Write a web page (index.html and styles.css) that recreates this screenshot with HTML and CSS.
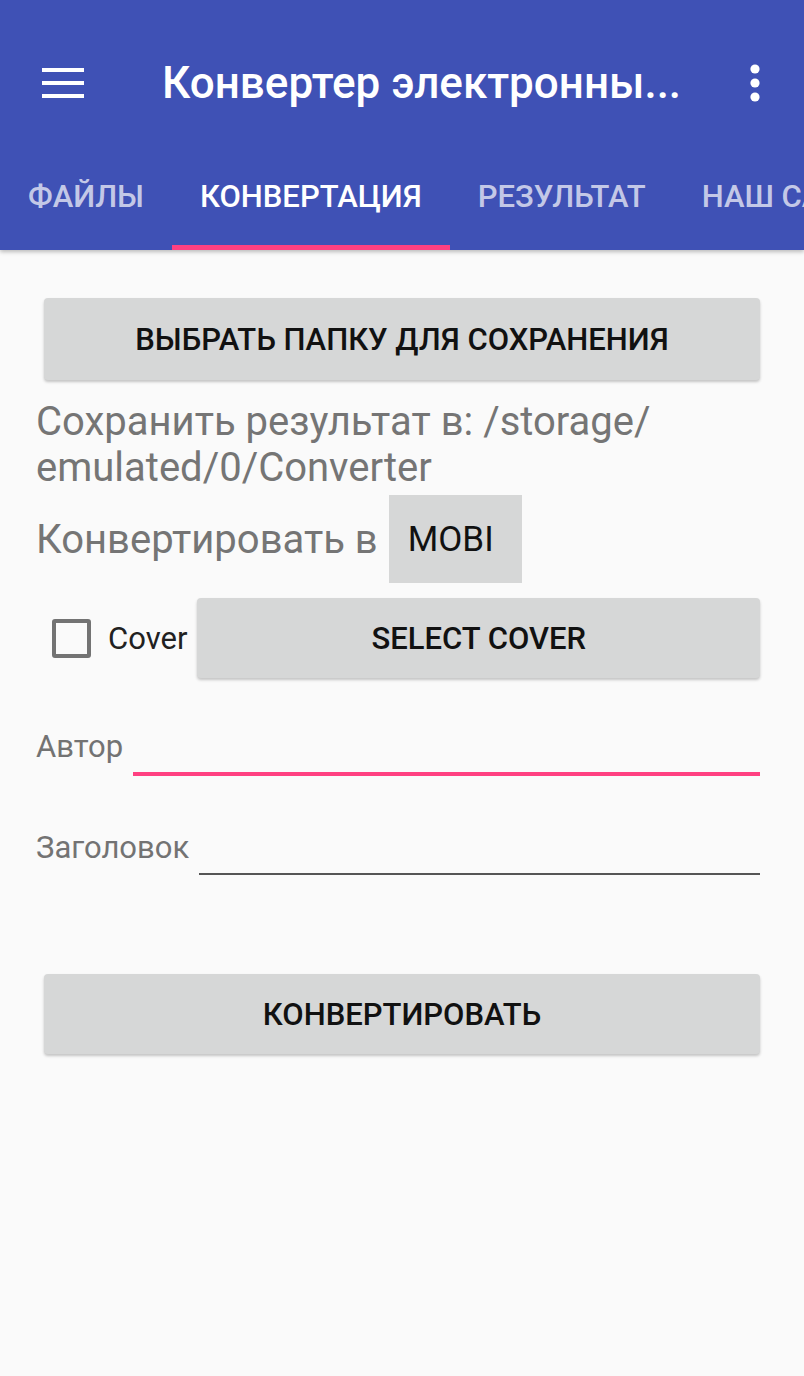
FILE: index.html
```html
<!DOCTYPE html>
<html lang="ru">
<head>
    <meta charset="UTF-8">
    <meta name="viewport" content="width=device-width, initial-scale=1.0">
    <title>Конвертер электронных книг</title>
    <link rel="stylesheet" href="styles.css">
</head>
<body>
    <header class="appbar">
        <div class="toolbar">
            <button class="icon-btn menu" aria-label="Меню">
                <svg width="42" height="32" viewBox="0 0 42 32">
                    <rect x="0" y="1" width="42" height="4" fill="#fff"/>
                    <rect x="0" y="14" width="42" height="4" fill="#fff"/>
                    <rect x="0" y="27" width="42" height="4" fill="#fff"/>
                </svg>
            </button>
            <h1 class="title">Конвертер электронны...</h1>
            <button class="icon-btn more" aria-label="Ещё">
                <svg width="10" height="38" viewBox="0 0 10 38">
                    <circle cx="5" cy="5" r="4.6" fill="#fff"/>
                    <circle cx="5" cy="19" r="4.6" fill="#fff"/>
                    <circle cx="5" cy="33" r="4.6" fill="#fff"/>
                </svg>
            </button>
        </div>
        <nav class="tabs">
            <div class="tab">ФАЙЛЫ</div>
            <div class="tab active">КОНВЕРТАЦИЯ</div>
            <div class="tab">РЕЗУЛЬТАТ</div>
            <div class="tab">НАШ САЙТ</div>
        </nav>
    </header>

    <main class="content">
        <button class="btn btn-folder">ВЫБРАТЬ ПАПКУ ДЛЯ СОХРАНЕНИЯ</button>

        <p class="save-path">Сохранить результат в: /storage/ emulated/0/Converter</p>

        <div class="format-row">
            <span class="format-label">Конвертировать в</span>
            <div class="spinner">MOBI</div>
        </div>

        <div class="cover-row">
            <label class="check">
                <span class="check-box"></span>
                <span class="check-text">Cover</span>
            </label>
            <button class="btn btn-cover">SELECT COVER</button>
        </div>

        <div class="field field-author">
            <span class="field-label">Автор</span>
            <input class="field-input focused" type="text">
        </div>

        <div class="field field-title">
            <span class="field-label">Заголовок</span>
            <input class="field-input" type="text">
        </div>

        <button class="btn btn-convert">КОНВЕРТИРОВАТЬ</button>
    </main>
</body>
</html>
```

FILE: styles.css
```css
* { box-sizing: border-box; }
body { margin: 0; background: #fafafa; font-family: Roboto, "Noto Sans", sans-serif; width: 804px; height: 1376px; overflow: hidden; }

.appbar { background: #3f51b5; height: 250px; box-shadow: 0 2px 4px rgba(0,0,0,0.25); position: relative; }
.toolbar { height: 166px; display: flex; align-items: center; }
.icon-btn { background: none; border: 0; padding: 0; display: flex; }
.menu { margin-left: 42px; }
.title { margin: 0 0 0 78px; flex: 1; color: #fff; font-size: 44px; font-weight: 500; white-space: nowrap; }
.more { margin-right: 44px; }

.tabs { display: flex; height: 84px; overflow: hidden; }
.tab { flex: none; height: 84px; padding: 13px 28px 0; font-size: 31px; line-height: 36px; font-weight: 500; color: rgba(255,255,255,0.7); white-space: nowrap; }
.tab.active { color: #fff; border-bottom: 5px solid #ff4081; }

.content { padding: 0 36px; }

.btn { display: block; background: #d6d7d7; border: 0; border-radius: 4px; font-family: inherit; font-size: 31px; font-weight: 500; color: #111; height: 80px; box-shadow: 0 2px 3px rgba(0,0,0,0.22); }
.btn-folder { width: calc(100% - 16px); margin: 48px 8px 0; height: 82px; }

.save-path { margin: 19px 0 0; font-size: 40px; line-height: 46px; color: #757575; padding-right: 60px; }

.format-row { display: flex; align-items: center; height: 88px; margin-top: 4px; }
.format-label { font-size: 40px; color: #757575; }
.spinner { margin-left: 11px; width: 133px; height: 88px; background: #d6d7d7; font-size: 35px; color: #111; padding-left: 19px; display: flex; align-items: center; }

.cover-row { display: flex; align-items: center; margin-top: 15px; }
.check { display: flex; align-items: center; margin-left: 16px; }
.check-box { width: 39px; height: 39px; border: 4px solid #737373; border-radius: 3px; }
.check-text { margin-left: 17px; font-size: 31px; color: #212121; }
.btn-cover { flex: 1; margin: 0 8px 0 10px; }

.field { display: flex; align-items: flex-end; }
.field-author { height: 98px; }
.field-title { height: 99px; }
.field-label { font-size: 31px; line-height: 34px; color: #737373; }
.field-author .field-label { margin-bottom: 12px; }
.field-title .field-label { margin-bottom: 10px; }
.field-input { flex: 1; height: 50px; margin: 0 8px 0 10px; border: 0; border-bottom: 2px solid #555; background: transparent; outline: none; }
.field-input.focused { border-bottom: 4px solid #ff4081; }

.btn-convert { width: calc(100% - 16px); margin: 99px 8px 0; }
```
